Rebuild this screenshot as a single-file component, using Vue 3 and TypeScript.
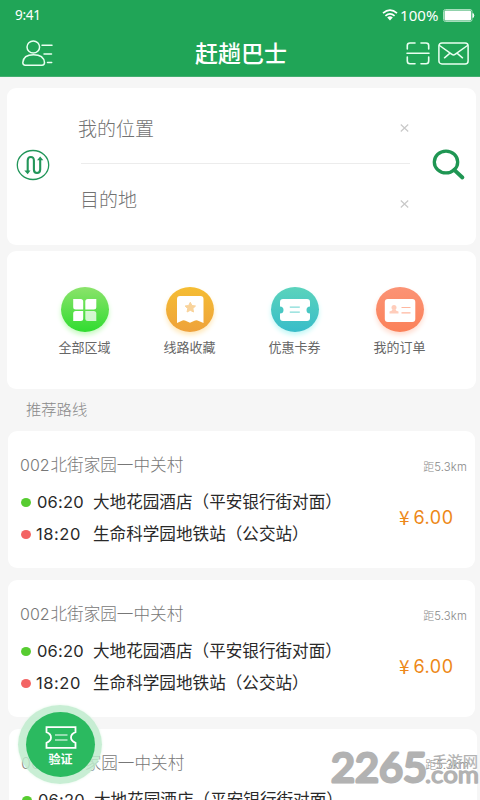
<script setup lang="ts">
interface Stop {
  time: string
  name: string
  kind: 'start' | 'end'
}
interface Route {
  id: number
  title: string
  distance: string
  price: string
  stops: Stop[]
}

const stops: Stop[] = [
  { time: '06:20', name: '大地花园酒店（平安银行街对面）', kind: 'start' },
  { time: '18:20', name: '生命科学园地铁站（公交站）', kind: 'end' },
]
const routes: Route[] = [1, 2, 3].map((id) => ({
  id,
  title: '北街家园一中关村',
  distance: '5.3km',
  price: '6.00',
  stops,
}))
const menu = [
  { key: 'area', label: '全部区域' },
  { key: 'star', label: '线路收藏' },
  { key: 'coupon', label: '优惠卡券' },
  { key: 'order', label: '我的订单' },
]
</script>

<template>
  <div class="screen">
    <header class="header">
      <div class="status">
        <span class="clock">9:41</span>
        <div class="status-right">
          <svg class="wifi" width="16" height="12" viewBox="0 0 16 12">
            <path d="M1 4.2Q8-2 15 4.2M3.4 6.8Q8 2.8 12.6 6.8" fill="none" stroke="#fff" stroke-width="1.7" />
            <path d="M5.2 8.4Q8 6.2 10.8 8.4L8 11.4Z" fill="#fff" />
          </svg>
          <span class="percent">100%</span>
          <svg width="32" height="13" viewBox="0 0 32 13">
            <rect x=".5" y=".5" width="28.5" height="12" rx="2" fill="none" stroke="#a7dfbd" />
            <rect x="1.5" y="1.5" width="26.5" height="10" rx="1" fill="#fff" />
            <path d="M30 4.5q1.6 2 0 4z" fill="#fff" stroke="#fff" />
          </svg>
        </div>
      </div>
      <div class="navbar">
        <svg class="user" width="31" height="27" viewBox="0 0 31 27" fill="none" stroke="#e9fff1" stroke-width="1.5" stroke-linecap="round">
          <ellipse cx="11.3" cy="7" rx="6.3" ry="6" />
          <path d="M.8 22.5C1.2 17 5 14.7 11.5 14.7S22 17 22.5 22.5Q22.5 25.2 20 25.2H3.3Q.8 25.2.8 22.5ZM20 5.3h10M22 14h7.5M25.5 22.5h4.2" />
        </svg>
        <h1>赶趟巴士</h1>
        <div class="actions">
          <svg width="24" height="23" viewBox="0 0 24 23" fill="none" stroke="#e9fff1" stroke-width="1.6" stroke-linecap="round">
            <path d="M9 1H4Q1.3 1 1.3 3.5V7M15 1h5q2.7 0 2.7 2.5V7M1.3 15v4Q1.3 21.8 4 21.8H9M22.7 15v4q0 2.8-2.7 2.8H15M1 11.2h22" />
          </svg>
          <svg width="31" height="23" viewBox="0 0 31 23" fill="none" stroke="#e9fff1" stroke-width="1.5" stroke-linecap="round">
            <rect x=".9" y=".9" width="29.2" height="21" rx="3" />
            <path d="M1.500 3.500L14 12.300Q15.500 13.500 17 12.300L29.500 3.500M6.500 15.800L12 11.200M24.500 15.800L19 11.200" />
          </svg>
        </div>
      </div>
    </header>

    <section class="search card">
      <svg class="swap" width="34" height="32" viewBox="0 0 34 32">
        <ellipse cx="17" cy="16" rx="15.7" ry="14.5" fill="none" stroke="#22965a" stroke-width="1.3" />
        <path d="M11.7 23V11.5Q11.7 8 14.8 8T17.9 11.5V20.5Q17.9 24 21 24T24.2 20.5V10" fill="none" stroke="#22965a" stroke-width="2.1" />
        <path d="M8.3 21.5h6.2l-2.8 3.7zM21 11.2h6.3l-3.1-3.8z" fill="#22965a" />
      </svg>
      <div class="fields">
        <div class="field from">
          <span>我的位置</span>
          <svg width="9" height="8" viewBox="0 0 9 8"><path d="M.8.5l7.4 7M8.2.5l-7.4 7" stroke="#c9c9c9" stroke-width="1.200" /></svg>
        </div>
        <div class="field to">
          <span>目的地</span>
          <svg width="9" height="8" viewBox="0 0 9 8"><path d="M.8.5l7.4 7M8.2.5l-7.4 7" stroke="#c9c9c9" stroke-width="1.200" /></svg>
        </div>
      </div>
      <svg class="find" width="34" height="32" viewBox="0 0 34 32" fill="none" stroke="#1f9653">
        <ellipse cx="14" cy="13" rx="11.7" ry="10.9" stroke-width="3.300" />
        <path d="M22.2 20.8l8.2 7.7" stroke-width="3.9" stroke-linecap="round" />
      </svg>
    </section>

    <section class="menu card">
      <div v-for="m in menu" :key="m.key" class="menu-item">
        <div class="bubble" :class="m.key">
          <svg width="48" height="45" viewBox="0 0 48 45" fill="#fff">
            <template v-if="m.key === 'area'">
              <path d="M12.200 12h7.500q2.500 0 2.500 2.500v8h-7.500q-2.500 0-2.500-2.500z" />
              <path d="M24.300 22.500v-8q0-2.500 2.500-2.500h8.500v8q0 2.500-2.500 2.500z" />
              <path d="M14.700 24h7.500v7.500q0 2.500-2.500 2.500h-7.500v-7.500q0-2.500 2.500-2.500z" />
              <path d="M24.300 24h8.500q2.500 0 2.500 2.500V34h-8.500q-2.500 0-2.500-2.500z" opacity=".75" />
            </template>
            <template v-else-if="m.key === 'star'">
              <path d="M11 12q0-3 3-3h20.500q3 0 3 3v24l-6-2.500q-1.500-.5-3 .2L24 35.800l-4.500-2.100q-1.500-.7-3-.2L11 36z" />
              <path d="M24.300 15.300l1.600 3.200 3.600.5-2.600 2.500.6 3.500-3.200-1.700-3.200 1.700.6-3.500-2.600-2.500 3.600-.5z" fill="#f9d39a" stroke="#f9d39a" stroke-linejoin="round" />
            </template>
            <template v-else-if="m.key === 'coupon'">
              <path d="M9 15q0-3 3-3h24q3 0 3 3v4.500q-3.500 0-3.500 3.500t3.500 3.500V31q0 3-3 3H12q-3 0-3-3v-4.500q3.500 0 3.500-3.500T9 19.500z" />
              <path d="M18.800 20.200h10M18.800 25.200h10" stroke="#83dcd8" stroke-width="1.200" />
            </template>
            <template v-else>
              <rect x="8.800" y="12" width="30.500" height="23" rx="3" />
              <circle cx="18" cy="20.500" r="2.500" fill="#ffcdbb" />
              <path d="M16.500 22.500h3q.2 1.500 3 2v2H13.500v-2q2.800-.5 3-2z" fill="#ffcdbb" />
              <path d="M25.500 20.500h9M25.500 25.800h9" stroke="#ffb79f" stroke-width="1.200" />
            </template>
          </svg>
        </div>
        <span>{{ m.label }}</span>
      </div>
    </section>

    <h2>推荐路线</h2>

    <section v-for="r in routes" :key="r.id" class="route card" :class="{ last: r.id === 3 }">
      <div class="route-head">
        <div class="route-title"><span class="code">002</span>{{ r.title }}</div>
        <div class="distance">距<span>{{ r.distance }}</span></div>
      </div>
      <div class="route-body">
        <div class="stops">
          <div v-for="s in r.stops" :key="s.time" class="stop" :class="s.kind">
            <i class="dot"></i>
            <span class="time">{{ s.time }}</span>
            <span class="name">{{ s.name }}</span>
          </div>
        </div>
        <div class="price"><span class="yen">¥</span><span class="amount">{{ r.price }}</span></div>
      </div>
    </section>

    <button class="verify">
      <span class="verify-core">
        <svg width="32" height="23" viewBox="0 0 32 23" fill="none" stroke="#fff">
          <path d="M1.500 1.200h29v5q-4.500 1.800-4.500 5.300t4.500 5.300v5h-29v-5q4.500-1.800 4.500-5.300T1.500 6.200z" stroke-width="1.800" />
          <path d="M10 9h12.500M10 14h12.500" stroke-width="1.200" />
        </svg>
        <span>验证</span>
      </span>
    </button>

    <svg class="watermark" width="154" height="44" viewBox="0 0 154 44">
      <g fill="#acacac" stroke="#acacac" stroke-linejoin="round" stroke-linecap="round">
        <text x="5" y="35.500" textLength="96" lengthAdjust="spacingAndGlyphs" font-size="41" font-weight="400" stroke-width="3.200">2265</text>
        <text x="99" y="36.500" textLength="54" lengthAdjust="spacingAndGlyphs" font-size="23" font-weight="400" stroke-width="1.300">.com</text>
        <text class="cjk" x="106" y="21" textLength="46" lengthAdjust="spacingAndGlyphs" font-size="15" stroke-width=".2">手游网</text>
      </g>
    </svg>
  </div>
</template>

<style>
body { margin: 0; overflow: hidden; background: #f6f6f6; }
</style>

<style scoped>
* { box-sizing: border-box; }
.screen {
  position: relative; width: 480px; height: 800px; overflow: hidden; background: #f6f6f6;
  font-family: "Liberation Sans", "Noto Sans CJK SC", sans-serif; color: #292929;
}
svg { display: block; flex: none; }
.header { height: 77px; background: #20a557; color: #fff; border-bottom: 1px solid #43ae70; }
.status { height: 29px; display: flex; justify-content: space-between; align-items: center; padding: 1px 5px 0 15px; }
.clock, .percent { font: 14px/18px "Noto Sans", sans-serif; }
.clock { font-size: 13.500px; letter-spacing: -.3px; padding-bottom: 1px; }
.status-right { display: flex; align-items: center; }
.percent { margin: 0 2px 1px 2px; width: 41px; font-size: 15px; letter-spacing: .1px; }
.navbar { height: 47px; display: grid; grid-template-columns: 1fr auto 1fr; align-items: center; padding: 2px 11px 0 22px; }
h1 { margin: 0 0 0 -9px; font-size: 23px; line-height: 30px; font-weight: 500; }
.actions { display: flex; justify-content: flex-end; gap: 8px; }
.card { background: #fff; border-radius: 9px; }
.search { height: 157px; margin: 11px 4px 0 7px; display: flex; align-items: center; padding: 0 9px 3px; }
.fields { width: 329px; margin-left: 31px; height: 157px; padding-top: 3px; font-size: 19px; font-weight: 300; color: #727272; }
.field { display: flex; align-items: center; justify-content: space-between; line-height: 28px; }
.field span { margin-left: -3px; }
.field svg { margin-right: 1px; }
.from { height: 74px; padding-top: 4px; border-bottom: 1px solid #ececec; }
.from span { margin-top: 3px; }
.from svg { margin-top: -1px; }
.to { height: 80px; padding-bottom: 6px; }
.to span { margin-left: -1px; }
.to svg { margin-top: 6px; }
.find { margin-left: 22px; }
.menu { height: 138px; margin: 6px 4px 0 7px; padding: 36px 25px 0; display: grid; grid-template-columns: repeat(4, 105px); }
.menu-item { display: flex; flex-direction: column; align-items: center; gap: 6px; font-size: 13px; line-height: 20px; color: #666; }
.bubble { width: 48px; height: 45px; border-radius: 50%; }
.bubble.area { background: linear-gradient(#8be36b, #30dc30); box-shadow: 0 3px 5px #c6fac0; }
.bubble.star { background: linear-gradient(#f5bd33, #eea23b); box-shadow: 0 3px 5px #ffe8b9; }
.bubble.coupon { background: linear-gradient(#5bd3bc, #38bdc9); box-shadow: 0 3px 5px #c3f8f6; }
.bubble.order { background: linear-gradient(#fb9375, #fb8159); box-shadow: 0 3px 5px #ffdccf; }
h2 { margin: 0; height: 42px; padding: 9px 0 0 26px; font-size: 15.300px; line-height: 24px; font-weight: 300; color: #888; }
.route { height: 137px; margin: 0 5px 12px 8px; padding: 22px 8px 0 12px; }
.route.last { margin-left: 9px; margin-right: 3px; }
.route-head { display: flex; justify-content: space-between; height: 33px; font-size: 16.600px; line-height: 25px; font-weight: 300; color: #777; }
.route-title { display: flex; }
.code { display: inline-block; width: 30.500px; font-family: Inter, "Liberation Sans", sans-serif; font-weight: 300; font-size: 16px; }
.distance { font-size: 11px; color: #888; padding-top: 2px; }
.distance span { font-family: Inter, sans-serif; font-size: 11.300px; font-weight: 300; letter-spacing: .15px; }
.route-body { display: flex; justify-content: space-between; }
.stop { display: flex; align-items: center; height: 32px; font-size: 16.600px; white-space: nowrap; padding-left: 1px; }
.dot { width: 10px; height: 9px; border-radius: 50%; background: #57cc31; margin-top: 1px; }
.end .dot { background: #f36464; }
.name { margin-top: -3px; }
.time { width: 56px; margin-left: 6px; font: 400 16.500px/24px Inter, sans-serif; letter-spacing: .2px; }
.end .time { margin-left: 5px; width: 57px; letter-spacing: .55px; }
.price { display: flex; align-items: center; width: 68px; height: 64px; color: #ed8818; }
.yen { width: 14.500px; font-family: "Noto Sans CJK SC", sans-serif; font-size: 19px; margin-top: -4px; }
.amount { font: 400 18px/24px Inter, sans-serif; letter-spacing: .5px; }
.verify { position: absolute; left: 18px; top: 705px; width: 84px; height: 79px; border: 0; padding: 7px 8px; border-radius: 50%; background: rgba(190, 235, 204, .85); font-family: inherit; box-shadow: 0 0 3px #e4f7e9; }
.verify-core { width: 69px; height: 65px; border-radius: 50%; background: #2bba60; color: #fff; display: flex; flex-direction: column; align-items: center; padding-top: 14px; gap: 3px; font-size: 12px; line-height: 16px; font-weight: 700; }
.watermark { position: absolute; left: 326px; top: 746px; opacity: .92; font-family: Lato, sans-serif; }
.cjk { font-family: "Noto Sans CJK SC", sans-serif; }
</style>
